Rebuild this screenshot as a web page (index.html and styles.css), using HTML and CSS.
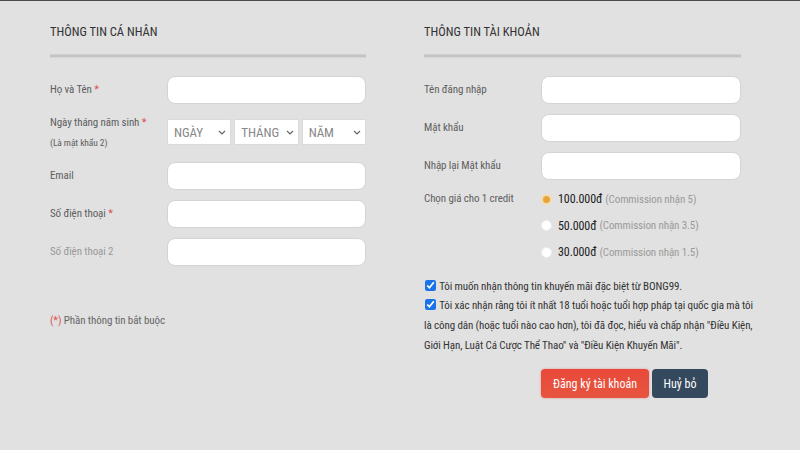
FILE: index.html
```html
<!DOCTYPE html>
<html lang="vi">
<head>
  <meta charset="UTF-8"/>
  <title>Đăng ký tài khoản</title>
  <link rel="stylesheet" href="styles.css">
</head>
<body>
  <form class="register">
    <section class="col col-left">
      <h2>Thông tin cá nhân</h2>
      <div class="divider"></div>

      <div class="row">
        <label>Họ và Tên <span class="req">*</span></label>
        <input type="text">
      </div>
      <div class="row row-date">
        <label>Ngày tháng năm sinh <span class="req">*</span><small>(Là mật khẩu 2)</small></label>
        <div class="dates">
          <select><option>NGÀY</option></select>
          <select><option>THÁNG</option></select>
          <select><option>NĂM</option></select>
        </div>
      </div>
      <div class="row">
        <label>Email</label>
        <input type="email">
      </div>
      <div class="row">
        <label>Số điện thoại <span class="req">*</span></label>
        <input type="text">
      </div>
      <div class="row">
        <label class="muted">Số điện thoại 2</label>
        <input type="text">
      </div>

      <p class="note"><span class="req">(*)</span> Phần thông tin bắt buộc</p>
    </section>

    <section class="col col-right">
      <h2>Thông tin tài khoản</h2>
      <div class="divider"></div>

      <div class="row">
        <label>Tên đăng nhập</label>
        <input type="text">
      </div>
      <div class="row">
        <label>Mật khẩu</label>
        <input type="password">
      </div>
      <div class="row">
        <label>Nhập lại Mật khẩu</label>
        <input type="password">
      </div>

      <div class="row row-credit">
        <label>Chọn giá cho 1 credit</label>
        <div class="radios">
          <div class="radio"><input type="radio" name="credit" checked><b>100.000đ</b> <span>(Commission nhận 5)</span></div>
          <div class="radio"><input type="radio" name="credit"><b>50.000đ</b> <span>(Commission nhận 3.5)</span></div>
          <div class="radio"><input type="radio" name="credit"><b>30.000đ</b> <span>(Commission nhận 1.5)</span></div>
        </div>
      </div>

      <div class="agree">
        <p><input type="checkbox" checked> Tôi muốn nhận thông tin khuyến mãi đặc biệt từ BONG99.</p>
        <p><input type="checkbox" checked> Tôi xác nhận rằng tôi ít nhất 18 tuổi hoặc tuổi hợp pháp tại quốc gia mà tôi là công dân (hoặc tuổi nào cao hơn), tôi đã đọc, hiểu và chấp nhận "Điều Kiện, Giới Hạn, Luật Cá Cược Thể Thao" và "Điều Kiện Khuyến Mãi".</p>
      </div>

      <div class="actions">
        <button type="submit" class="btn btn-red">Đăng ký tài khoản</button>
        <button type="button" class="btn btn-dark">Huỷ bỏ</button>
      </div>
    </section>
  </form>
</body>
</html>
```

FILE: styles.css
```css
:root {
  --bg: #e1e1e1;
  --text: #5e5e5e;
  --heading: #333;
  --req: #d9534f;
  --red: #e74c3c;
  --dark: #34495e;
}
* { box-sizing:border-box; margin:0; padding:0; }
body {
  background:var(--bg); color:var(--text);
  font-family:"Roboto Condensed",Roboto,"Liberation Sans",sans-serif;
  font-size:11px; letter-spacing:-0.1px;
  border-top:1px solid #4a4a4a;
  height:450px; overflow:hidden;
}

.register {
  display:flex; gap:58px;
  padding:0 0 0 50px;
}
.col { width:316px; flex:none; }
.col-right { width:317px; }

h2 {
  font-size:12.5px; font-weight:400; text-transform:uppercase;
  color:var(--heading); line-height:16px; letter-spacing:0;
  margin-top:23px;
}
.divider {
  height:4px; margin:14px 0 18px;
  border-top:1px solid #cfcfcf;
  background:#c4c4c4;
  border-bottom:1px solid #d6d6d6;
}

/* —— rows —— */
.row {
  display:flex; align-items:center;
  margin-bottom:10px;
}
.row label { width:117px; flex:none; line-height:16px; }
.row input[type=text], .row input[type=email], .row input[type=password] {
  flex:1; height:28px;
  background:#fff; border:1px solid #d4d4d4; border-radius:8px;
}
.req { color:var(--req); }
.muted { color:#999; }

.row-date { align-items:flex-start; height:38px; }
.row-date label { padding-top:1px; }
.row-date small {
  display:block; font-size:9.5px; margin-top:4px;
}
.dates { flex:1; display:flex; gap:3px; padding-top:5px; }
.dates select {
  flex:1; height:26px; min-width:0;
  appearance:none; -webkit-appearance:none;
  background:#fff url("data:image/svg+xml,%3Csvg xmlns='http://www.w3.org/2000/svg' width='8' height='5'%3E%3Cpath d='M1 1l3 3 3-3' fill='none' stroke='%23666' stroke-width='1.2'/%3E%3C/svg%3E") no-repeat right 4px center;
  border:1px solid #dadada; border-radius:0;
  font-family:inherit; font-size:13px; letter-spacing:-0.1px; color:#888;
  padding-left:6px;
}

.note { margin-top:48px; color:#666; }

/* —— credit —— */
.row-credit { align-items:flex-start; margin-top:-4px; margin-bottom:0; }
.row-credit label { line-height:26px; }
.radios { flex:1; }
.radio { display:flex; align-items:center; height:26.5px; }
.radio input {
  appearance:none; -webkit-appearance:none;
  width:11px; height:11px; border-radius:50%;
  background:#fff; border:1px solid #ececec; margin:0 6px 0 0;
}
.radio input:checked {
  background:#e8a33a;
  border:2px solid #f5dcb0;
}
.radio b { font-weight:400; color:#222; font-size:12px; }
.radio span { color:#9a9a9a; margin-left:3px; }

/* —— agreement —— */
.agree { width:330px; margin-top:11px; color:#333; line-height:19.7px; }
.agree input {
  width:11px; height:11px; margin:0 1px 0 1px; vertical-align:-1px;
  accent-color:#1a73e8;
}

/* —— buttons —— */
.actions { display:flex; gap:3px; padding-left:117px; margin-top:14px; }
.btn {
  height:29px; border:none; border-radius:4px;
  color:#fff; font-family:inherit; font-size:12px; letter-spacing:0;
}
.btn-red { width:108px; background:linear-gradient(#e9493a,#e65540); box-shadow:0 0 2px rgba(231,76,60,0.6); }
.btn-dark { width:56px; background:var(--dark); }
```
